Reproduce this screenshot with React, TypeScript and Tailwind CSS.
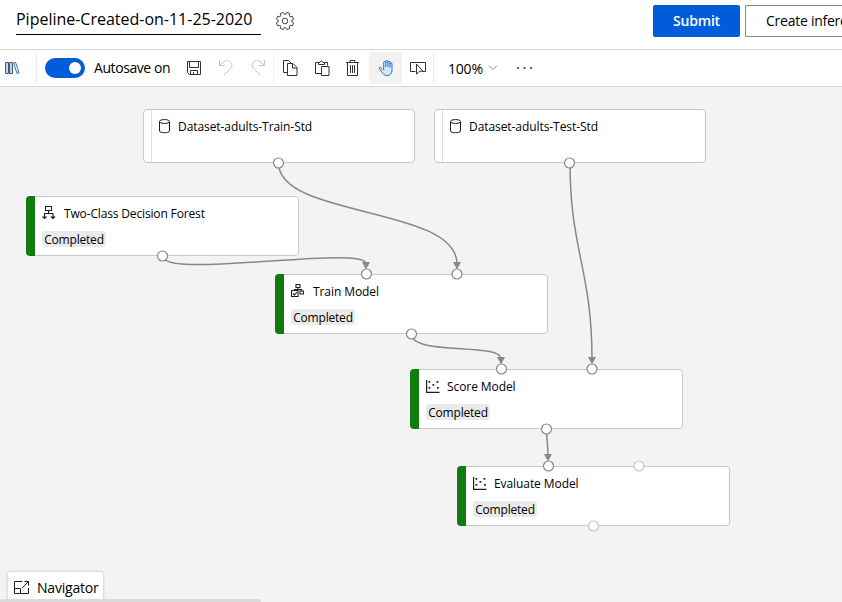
import React from "react";

type IconProps = { children: React.ReactNode; className?: string; w?: number; h?: number };

function Glyph({ children, className = "text-[#323130]", w = 16, h = 16 }: IconProps) {
  return (
    <svg
      width={w}
      height={h}
      viewBox={`0 0 ${w} ${h}`}
      fill="none"
      stroke="currentColor"
      strokeWidth={1}
      className={`block shrink-0 ${className}`}
    >
      {children}
    </svg>
  );
}

const gearPath = (() => {
  const teeth = 8;
  const pts: string[] = [];
  for (let i = 0; i < teeth; i++) {
    const a = ((i + 0.5) * 2 * Math.PI) / teeth;
    const at = (r: number, d: number) =>
      `${(10 + r * Math.sin(a + d)).toFixed(2)} ${(10 - r * Math.cos(a + d)).toFixed(2)}`;
    pts.push(`${at(7.2, -0.25)} L${at(8.8, -0.19)} L${at(8.8, 0.19)} L${at(7.2, 0.25)} L${at(6.5, 0.39)}`);
  }
  return `M${pts.join(" L")} Z`;
})();

function TitleBar() {
  return (
    <header className="flex h-[50px] shrink-0 items-start border-b border-[#d6d6d6] bg-white">
      <div className="ml-4 mt-1.5 flex h-[29px] w-[245px] shrink-0 items-center border-b border-black pb-0.5 text-base tracking-[-0.01px] whitespace-nowrap">
        Pipeline-Created-on-11-25-2020
      </div>
      <div className="mt-[11px] ml-[14px]">
        <Glyph w={20} h={20} className="text-[#484644]">
          <path d={gearPath} strokeLinejoin="round" />
          <circle cx="10" cy="10" r="2.800" />
        </Glyph>
      </div>
      <button className="mt-[5px] ml-auto h-8 w-[87px] shrink-0 rounded-[2px] bg-[#015cda] text-sm font-semibold tracking-[-0.2px] text-white">
        Submit
      </button>
      <div className="mt-[5px] ml-[5px] flex h-8 w-[97px] shrink-0 items-center overflow-hidden rounded-l-[2px] border border-r-0 border-[#8a8886] pl-5 text-sm tracking-[-0.25px] whitespace-nowrap">
        Create inference pipeline
      </div>
    </header>
  );
}

function Toolbar() {
  return (
    <div className="flex h-[37px] shrink-0 items-center border-b border-[#d6d6d6] bg-white">
      <div className="flex h-[31px] w-[37px] items-center border-r border-[#edebe9] pl-1">
        <Glyph>
          <g className="text-[#2b73b8]">
            <path d="M1.500 2.500h3v11h-3zM5.500 2.500h3v11h-3z" fill="#b9d8f3" stroke="#4c5b6b" />
            <path d="M9.600 3l2-.6 3.400 10.400-2 .7z" />
          </g>
        </Glyph>
      </div>
      <div className="ml-2 flex h-5 w-10 shrink-0 items-center justify-end rounded-full bg-[#015cda] pr-1">
        <span className="size-3 rounded-full bg-white" />
      </div>
      <div className="ml-[9px] w-[92px] shrink-0 text-sm tracking-[-0.42px] whitespace-nowrap">Autosave on</div>
      <div className="flex w-[87px] shrink-0 items-center gap-4">
        <Glyph>
          <path d="M1.500 1.500h13v13h-11l-2-2z" />
          <path d="M3.500 1.500v6h9v-6M4.500 14.500v-4h7v4M7.500 12v2.500" />
        </Glyph>
        <Glyph className="text-[#c8c6c4]">
          <path d="M1.500 0v5.500h5.500M1.800 5.200L5 2.300C8-.2 11 .3 12.700 2.200c1.700 2 1.500 4.500-.2 6.300L6 15" />
        </Glyph>
        <Glyph className="text-[#c8c6c4]">
          <path d="M14.500 0v5.500H9M14.200 5.200L11 2.300C8-.2 5 .3 3.300 2.200c-1.700 2-1.500 4.500.2 6.300L10 15" />
        </Glyph>
      </div>
      <div className="flex h-[31px] w-24 shrink-0 items-center gap-4 border-l border-[#f0f0f0] pl-2">
        <Glyph>
          <path d="M5.500 12.500h-4v-12h5l2.500 2.500M5.500 3.500h5.500l4 4v8H5.500zM10.500 3.500v4.500H15" />
        </Glyph>
        <Glyph>
          <path d="M7.500 13.500h-6v-11h3m6 0h3v3M4.500 4.500v-2H6q1.500-3.500 3 0h1.500v2zM7.500 6.500h7.500v9H7.500z" />
        </Glyph>
        <Glyph className="-ml-px text-[#323130]">
          <path d="M1 2.500h13M5 2.500v-2h5v2M2.500 2.500v13h10v-13M5.500 5v8M7.500 5v8M9.500 5v8" />
        </Glyph>
      </div>
      <div className="flex h-8 w-[33px] shrink-0 items-center justify-center bg-[#f3f2f1]">
        <Glyph className="text-[#1966cf]">
          <path
            d="M4.500 9L2.800 7.600C1.700 6.800.7 8 1.500 9l3.400 4.500c1 1.400 2.200 2 4.100 2 3.300 0 5-2.300 5-5.200V3.800c0-1.300-2-1.300-2 0V2.300c0-1.300-2.100-1.300-2.100 0V1.500c0-1.300-2.100-1.300-2.100 0v.8c0-1.300-2.100-1.300-2.100 0V10M7.800 2v5M9.900 2v5M12 3v4.500"
            fill="#d3e5fb"
            strokeWidth={0.900}
          />
        </Glyph>
      </div>
      <div className="flex h-[31px] w-8 shrink-0 items-center border-r border-[#edebe9] pl-[7px]">
        <Glyph w={17} h={16}>
          <path d="M6.500 11.500h-5v-9h15v9h-3M7.500 4v10.200l3-3h3.500z" />
        </Glyph>
      </div>
      <div className="ml-3.5 w-10 pt-0.5 text-sm tracking-[-0.2px]">100%</div>
      <Glyph w={10} h={8} className="text-[#8a8886]">
        <path d="M1 1.500l4 4 4-4" />
      </Glyph>
      <Glyph w={18} h={4} className="ml-[18px] text-[#323130]">
        <path d="M1 2h2M7.500 2h2M14 2h2" strokeWidth={1.500} />
      </Glyph>
    </div>
  );
}

function DatasetIcon() {
  return (
    <Glyph className="text-[#201f1e]" w={14} h={16}>
      <ellipse cx="6.500" cy="3.500" rx="5" ry="2" />
      <path d="M1.500 3.500v9.500C1.500 15.300 11.500 15.300 11.500 13V3.500" />
    </Glyph>
  );
}

function ForestIcon() {
  return (
    <Glyph className="text-[#201f1e]" w={14} h={16}>
      <path
        d="M3.500 1.500h6v4h-6zM6.500 5.500v3M2.500 13.500V8.500h8.500v5M.5 11.500l2 2 2-2M9 11.500l2 2 2-2"
        strokeWidth={1.100}
      />
    </Glyph>
  );
}

function TrainIcon() {
  return (
    <Glyph className="text-[#201f1e]" w={14} h={16}>
      <path
        d="M5 1.500h4v3H5zM7 4.500v2M3.500 7.500v-1h7v2M.5 7.500h6.500v6H.5zM9 8h3.500v3H9zM2 10.500l1.500 1.500 2.500-3"
        strokeWidth={1.100}
      />
    </Glyph>
  );
}

function ScatterIcon() {
  return (
    <Glyph className="text-[#201f1e]" w={14} h={16}>
      <path d="M.6 2v12.400H13.500" strokeWidth={1.200} />
      <path
        d="M2.500 3h1.800v1.800H2.500zM10.500 3h1.800v1.800h-1.800zM6.500 6h1.800v1.800H6.500zM2.500 9h1.800v1.800H2.500zM11 9h1.800v1.800H11z"
        fill="currentColor"
        stroke="none"
      />
    </Glyph>
  );
}

type NodeProps = { icon: React.ReactNode; title: string; place: string; titleClass?: string };

function DatasetNode({ title, place }: { title: string; place: string }) {
  return (
    <section
      className={`absolute flex h-[54px] w-[272px] overflow-hidden rounded-[4px] border border-[#c8c8c8] bg-white ${place}`}
    >
      <div className="w-2 shrink-0 border-r border-[#e1dfdd]" />
      <div className="mt-2 flex h-4 items-center pl-1.5">
        <DatasetIcon />
        <h2 className="ml-[6px] pt-0.5 text-[12px] font-medium tracking-[-0.07px] whitespace-nowrap">{title}</h2>
      </div>
    </section>
  );
}

function PipelineNode({ icon, title, place, titleClass = "ml-2" }: NodeProps) {
  return (
    <section className={`absolute flex h-[60px] w-[273px] overflow-hidden rounded-[4px] ${place}`}>
      <div className="w-[9px] shrink-0 bg-[#107c10]" />
      <div className="flex-1 rounded-r-[4px] border border-l-0 border-[#c8c8c8] bg-white pl-[7px]">
        <div className="mt-2 flex h-4 items-center">
          {icon}
          <h2 className={`pt-0.5 text-[12px] font-medium whitespace-nowrap ${titleClass}`}>{title}</h2>
        </div>
        <span className="mt-2.5 flex h-4 w-[64px] items-center justify-center rounded-[3px] bg-[#eaeaea] pt-0.5 text-[12px] tracking-[-0.2px]">
          Completed
        </span>
      </div>
    </section>
  );
}

const edges = [
  "M278.500 163C278.500 218 457 206 457 264",
  "M570 163C570 250 592 270 592 359",
  "M162.500 256C162.500 280 366 244 366 264",
  "M411.500 334C411.500 356 501 342 501 359",
  "M546.500 429C546.500 440 548 445 548 456",
];

const arrows = [[457, 269], [592, 364], [366, 269], [501, 364], [548, 461]];

const ports = [
  [278.500, 163], [569.500, 163], [162.500, 256], [366.500, 274], [457, 274],
  [411.500, 334], [501.500, 369], [592, 369], [546.500, 429], [548.500, 466],
];

const freePorts = [[639, 466], [593.500, 526]];

function Canvas() {
  return (
    <main className="relative min-h-0 flex-1 overflow-hidden bg-[#f3f3f3]">
      <DatasetNode place="top-[22px] left-[143px]" title="Dataset-adults-Train-Std" />
      <DatasetNode place="top-[22px] left-[434px]" title="Dataset-adults-Test-Std" />
      <PipelineNode place="top-[109px] left-[26px]" icon={<ForestIcon />} title="Two-Class Decision Forest" titleClass="ml-2 tracking-[-0.15px]" />
      <PipelineNode place="top-[187px] left-[275px]" icon={<TrainIcon />} title="Train Model" titleClass="ml-2 tracking-[-0.08px]" />
      <PipelineNode place="top-[282px] left-[410px]" icon={<ScatterIcon />} title="Score Model" titleClass="ml-[7px] tracking-[-0.08px]" />
      <PipelineNode place="top-[379px] left-[457px]" icon={<ScatterIcon />} title="Evaluate Model" titleClass="ml-[7px] tracking-[-0.08px]" />

      <svg className="absolute inset-0" width="842" height="515" viewBox="0 87 842 515" fill="none">
        {edges.map((d) => (
          <path key={d} d={d} stroke="#8a8886" strokeWidth={1.500} />
        ))}
        {arrows.map(([x, y]) => (
          <path key={`${x}-${y}`} d={`M${x - 4} ${y - 7}h8l-4 7.500z`} fill="#8a8886" />
        ))}
        {ports.map(([x, y]) => (
          <circle key={`${x}-${y}`} cx={x} cy={y} r={5} fill="#fff" stroke="#8a8886" strokeWidth={1.200} />
        ))}
        {freePorts.map(([x, y]) => (
          <circle key={`${x}-${y}`} cx={x} cy={y} r={5} fill="#fff" stroke="#c8c6c4" strokeWidth={1.200} />
        ))}
      </svg>

      <div className="absolute bottom-0 left-2 flex h-[30px] w-[95px] items-center rounded-t-[2px] bg-white pt-0.5 pl-1.5 text-sm shadow-[0_0_3px_rgba(0,0,0,0.25)]">
        <Glyph className="text-[#201f1e]">
          <path d="M8.500 1.500h-8v12h14V8M.5 8.500h6v5M8 8l6.500-6.500M10.500 1.500h4v4" />
        </Glyph>
        <span className="ml-[7px] tracking-[-0.2px]">Navigator</span>
      </div>
      <div className="absolute bottom-0 left-0 h-[3px] w-[261px] rounded-tr-[3px] bg-[#d9dcde]" />
    </main>
  );
}

export default function App() {
  return (
    <div className="flex h-[602px] w-[842px] flex-col overflow-hidden bg-white font-['Open_Sans','Noto_Sans',sans-serif] text-black">
      <TitleBar />
      <Toolbar />
      <Canvas />
    </div>
  );
}
